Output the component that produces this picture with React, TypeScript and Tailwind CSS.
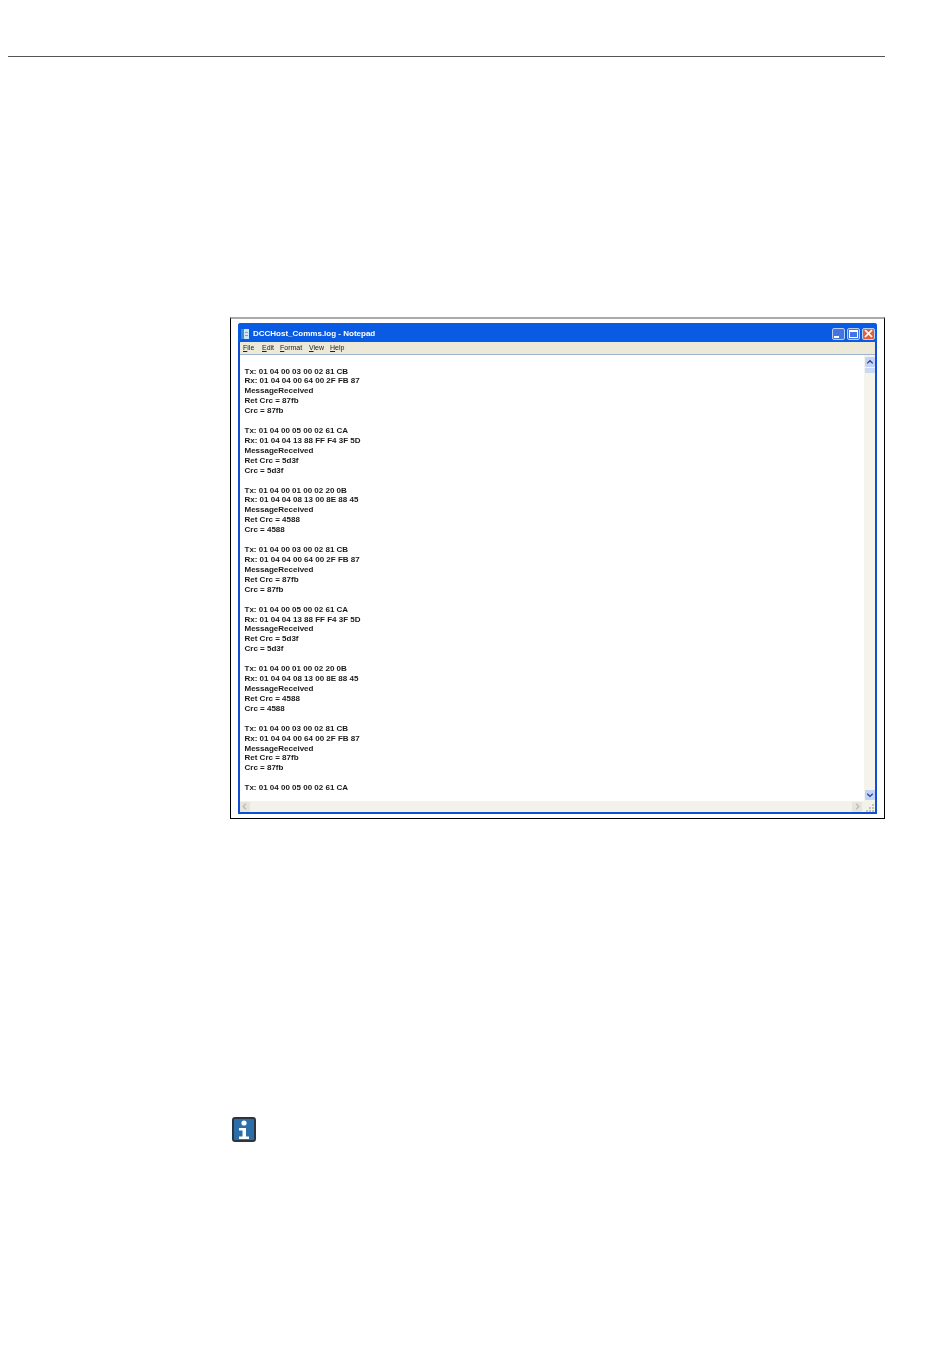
const blocks = [
  ["Tx: 01 04 00 03 00 02 81 CB", "Rx: 01 04 04 00 64 00 2F FB 87", "MessageReceived", "Ret Crc = 87fb", "Crc = 87fb"],
  ["Tx: 01 04 00 05 00 02 61 CA", "Rx: 01 04 04 13 88 FF F4 3F 5D", "MessageReceived", "Ret Crc = 5d3f", "Crc = 5d3f"],
  ["Tx: 01 04 00 01 00 02 20 0B", "Rx: 01 04 04 08 13 00 8E 88 45", "MessageReceived", "Ret Crc = 4588", "Crc = 4588"],
]
const lines = [0, 1, 2, 0, 1, 2, 0].flatMap((b) => [...blocks[b], ""])
lines.push("Tx: 01 04 00 05 00 02 61 CA")

const menus = [
  { first: "F", rest: "ile", cls: "w-[19px]" },
  { first: "E", rest: "dit", cls: "w-[18px]" },
  { first: "F", rest: "ormat", cls: "w-[29px]" },
  { first: "V", rest: "iew", cls: "w-[21px]" },
  { first: "H", rest: "elp", cls: "w-[15px]" },
]

function WinButton({ kind }: { kind: "min" | "max" | "close" }) {
  return (
    <div
      className={
        "w-[13px] h-[12px] rounded-[2px] border border-[#b9cdf5] flex items-center justify-center " +
        (kind === "close" ? "bg-[#e2603c]" : "bg-[#4274e2]")
      }
    >
      {kind === "min" && <div className="w-[5px] h-[2px] bg-white self-end mb-[1px] mr-[4px]" />}
      {kind === "max" && <div className="w-[9px] h-[8px] border border-white border-t-2" />}
      {kind === "close" && (
        <svg width="9" height="9" viewBox="0 0 9 9">
          <path d="M1 1 8 8M8 1 1 8" stroke="#fff" strokeWidth="1.7" />
        </svg>
      )}
    </div>
  )
}

function Arrow({ dir, dim }: { dir: "up" | "down" | "left" | "right"; dim?: boolean }) {
  const d = {
    up: "M2.5 6.5 5.5 3.5 8.5 6.5",
    down: "M2.5 3.5 5.5 6.5 8.5 3.5",
    left: "M6.5 2.5 3.5 5.5 6.5 8.5",
    right: "M4.5 2.5 7.5 5.5 4.5 8.5",
  }[dir]
  return (
    <div className={"w-[10px] h-[10px] rounded-[1px] flex items-center justify-center " + (dim ? "bg-[#e6e5dc]" : "bg-[#c3d3f7]")}>
      <svg width="11" height="11" viewBox="0 0 11 11">
        <path d={d} fill="none" stroke={dim ? "#bdbbb0" : "#27408b"} strokeWidth="1.4" />
      </svg>
    </div>
  )
}

export default function App() {
  return (
    <div
      className="w-[950px] h-[1370px] bg-white overflow-hidden pt-[56px] pl-[8px]"
      style={{ fontFamily: "'Liberation Sans', Arial, sans-serif" }}
    >
      {/* Page header rule */}
      <div className="w-[877px] h-[1px] bg-[#555]" />

      {/* Screenshot frame */}
      <div className="ml-[222px] mt-[260px] w-[655px] h-[502px] border border-black border-t-[2px] border-t-[#aaaaaa] pt-[4px] px-[7px] pb-[4px]">
        <div className="h-full border-[2px] border-t-0 border-[#0f4fd8] rounded-t-[3px] flex flex-col blur-[0.3px]">
          {/* Title bar */}
          <div className="h-[19px] -mx-[2px] bg-[#0a5be3] rounded-t-[3px] flex items-center pl-[3px] pr-[2px] pt-[2px] shrink-0">
            <svg width="8" height="10" viewBox="0 0 8 10">
              <rect width="8" height="10" fill="#cfe6f6" />
              <rect x="0" y="0" width="3" height="10" fill="#3a8fc8" />
              <rect x="4" y="3" width="3" height="1" fill="#7fa0c4" />
              <rect x="4" y="6" width="3" height="1" fill="#7fa0c4" />
            </svg>
            <span className="ml-[4px] text-[8px] font-bold text-white leading-none">DCCHost_Comms.log - Notepad</span>
            <div className="ml-auto flex gap-[2px]">
              <WinButton kind="min" />
              <WinButton kind="max" />
              <WinButton kind="close" />
            </div>
          </div>

          {/* Menu bar */}
          <div className="h-[13px] bg-[#ece9d8] border-b border-[#9db4d0] flex items-center pl-[3px] pb-[2px] text-[7px] text-[#222] leading-none shrink-0">
            {menus.map((m) => (
              <span key={m.rest} className={m.cls}>
                <span className="underline">{m.first}</span>
                {m.rest}
              </span>
            ))}
          </div>

          {/* Text area + vertical scrollbar */}
          <div className="flex-1 flex min-h-0 bg-white">
            <div className="flex-1 pl-[4.5px] pt-[11.5px] text-[8px] leading-[9.93px] font-bold text-[#1a1a1a]">
              {lines.map((line, i) => (
                <div key={i} className="h-[9.93px] whitespace-pre">
                  {line}
                </div>
              ))}
            </div>
            <div className="w-[11px] bg-[#f4f3ec] flex flex-col items-center pt-[2px]">
              <Arrow dir="up" />
              <div className="w-[10px] h-[5px] mt-[1px] bg-[#c9d7f8]" />
              <div className="mt-auto mb-[1px]">
                <Arrow dir="down" />
              </div>
            </div>
          </div>

          {/* Horizontal scrollbar */}
          <div className="h-[11px] bg-[#f3f2ea] flex items-center shrink-0">
            <Arrow dir="left" dim />
            <div className="ml-auto mr-[2px]">
              <Arrow dir="right" dim />
            </div>
            {/* Size grip */}
            <svg width="11" height="11" viewBox="0 0 11 11">
              <path d="M8 3h2v2H8zM5 6h2v2H5zM8 6h2v2H8zM2 9h2v2H2zM5 9h2v2H5zM8 9h2v2H8z" fill="#c4c2b6" />
            </svg>
          </div>
        </div>
      </div>

      {/* Note icon */}
      <div className="ml-[224px] mt-[298px] w-[24px] h-[25px] rounded-[3px] bg-[#2d6da8] border-[2px] border-[#2a3540] flex items-center justify-center">
        <svg width="14" height="20" viewBox="0 0 14 20">
          <circle cx="7" cy="3" r="2.6" fill="#fff" />
          <path d="M2 8H9V16.5H12V19H2V16.5H5.5V10.5H2Z" fill="#fff" />
        </svg>
      </div>
    </div>
  )
}
